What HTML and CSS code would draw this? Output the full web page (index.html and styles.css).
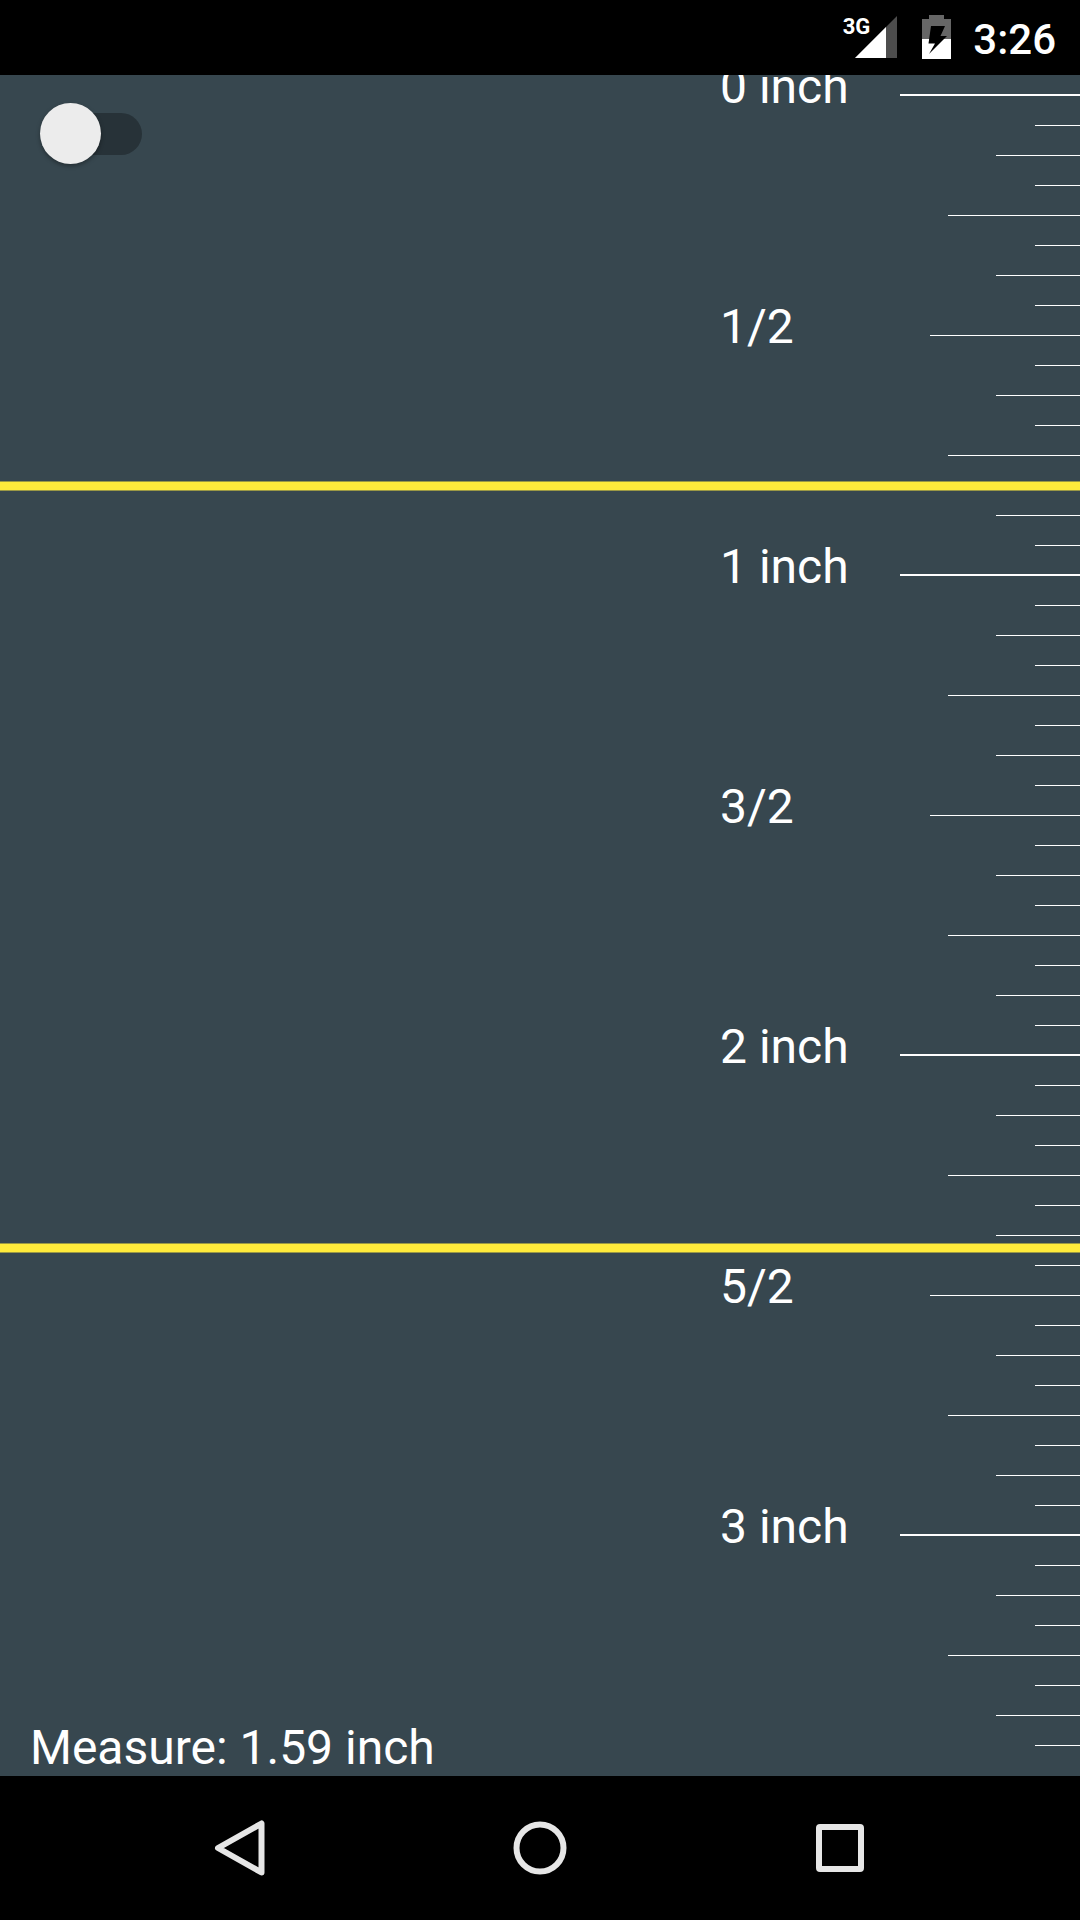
FILE: index.html
```html
<!DOCTYPE html>
<html lang="en">
<head>
<meta charset="utf-8">
<meta name="viewport" content="width=device-width, initial-scale=1">
<title>Ruler</title>
<link rel="stylesheet" href="styles.css">
</head>
<body>
<header class="status-bar">
  <div class="signal">
    <span class="network">3G</span>
    <svg class="signal-icon" viewBox="0 0 44 44" aria-hidden="true">
      <path d="M1 43L43 1V43Z" fill="#4d4d4d"/>
      <path d="M1 43L32 12V43Z" fill="#fff"/>
    </svg>
  </div>
  <svg class="battery-icon" viewBox="0 0 29 44" aria-hidden="true">
    <path d="M7 0H22V4H29V24H0V4H7Z" fill="#666"/>
    <path d="M0 24H29V44H0Z" fill="#fff"/>
    <path d="M9 11H23L18.500 21H25L7 39L13 28.500H6.500Z" fill="#000"/>
  </svg>
  <time class="clock">3:26</time>
</header>

<main class="stage">
  <section class="panel">
    <input class="switch" type="checkbox" role="switch" aria-label="Use centimetres">
    <output class="measure">Measure: 1.59 inch</output>
  </section>
  <ol class="labels">
    <li>0 inch</li>
    <li>1/2</li>
    <li>1 inch</li>
    <li>3/2</li>
    <li>2 inch</li>
    <li>5/2</li>
    <li>3 inch</li>
  </ol>
  <div class="ticks" id="ticks" aria-hidden="true"></div>
  <div class="marker marker-start" role="separator" aria-label="Start marker"></div>
  <div class="marker marker-end" role="separator" aria-label="End marker"></div>
</main>

<nav class="nav-bar" aria-label="System navigation">
  <button class="nav-button" type="button" aria-label="Back">
    <svg class="nav-icon" viewBox="0 0 72 72" aria-hidden="true"><path d="M57.500 11.500V60.500L14 36Z"/></svg>
  </button>
  <button class="nav-button" type="button" aria-label="Home">
    <svg class="nav-icon" viewBox="0 0 72 72" aria-hidden="true"><circle cx="36" cy="36" r="23.5"/></svg>
  </button>
  <button class="nav-button" type="button" aria-label="Overview">
    <svg class="nav-icon" viewBox="0 0 72 72" aria-hidden="true"><rect x="15" y="15" width="42" height="42" rx="1"/></svg>
  </button>
</nav>
<script src="ruler.js"></script>
</body>
</html>
```
FILE: styles.css
```css
* {
  box-sizing: border-box;
}

body {
  display: flex;
  flex-direction: column;
  min-height: 100vh;
  margin: 0;
  background: #000;
  color: #fff;
  font-family: Roboto, sans-serif;
  font-size: 48px;
  line-height: 56px;
}

/* Status bar */
.status-bar {
  display: flex;
  justify-content: flex-end;
  align-items: flex-start;
  gap: 22px;
  height: 75px;
  padding: 15px 24px 0;
}

.signal {
  display: flex;
  align-items: flex-start;
  margin-right: 2px;
}

.network {
  margin-right: -16px;
  font-size: 22px;
  font-weight: 700;
  line-height: 24px;
}

.signal-icon {
  width: 44px;
  height: 44px;
}

.battery-icon {
  width: 29px;
  height: 44px;
}

.clock {
  font-size: 42px;
  font-weight: 500;
  line-height: 50px;
}

/* Ruler */
.stage {
  position: relative;
  display: flex;
  flex: 1;
  overflow: hidden;
  background: #37474f;
}

.panel {
  display: flex;
  flex: 1;
  flex-direction: column;
  justify-content: space-between;
  align-items: flex-start;
  padding: 28px 30px 0;
}

.measure {
  white-space: nowrap;
}

.labels {
  width: 180px;
  margin: -16px 0 0;
  padding: 0;
  list-style: none;
}

.labels li {
  height: 240px;
}

.labels li:last-child {
  height: 56px;
}

.ticks {
  display: flex;
  flex-direction: column;
  align-items: flex-end;
  width: 180px;
  margin-top: -9px;
}

.tick {
  width: 45px;
  height: 30px;
  border-bottom: 1px solid #fff;
}

.tick-eighth {
  width: 84px;
}

.tick-quarter {
  width: 132px;
}

.tick-half {
  width: 150px;
}

.tick-inch {
  width: 180px;
  border-bottom-width: 2px;
}

.marker {
  position: absolute;
  left: 0;
  right: 0;
  height: 10px;
  border: solid #9b9945;
  border-width: 1px 0;
  background: #ffeb3b;
}

.marker-start {
  top: 406px;
}

.marker-end {
  top: 1168px;
}

/* Switch */
.switch {
  display: grid;
  align-items: center;
  width: 102px;
  height: 61px;
  margin: 0 10px;
  appearance: none;
}

.switch::before,
.switch::after {
  grid-area: 1 / 1;
  content: "";
}

.switch::before {
  height: 42px;
  margin-left: 12px;
  border-radius: 21px;
  background: #273238;
}

.switch::after {
  width: 61px;
  height: 61px;
  border-radius: 50%;
  background: #ececec;
  box-shadow: 0 2px 4px rgba(0, 0, 0, 0.35);
}

.switch:checked::after {
  justify-self: end;
}

/* Navigation bar */
.nav-bar {
  display: flex;
  justify-content: center;
  height: 144px;
}

.nav-button {
  display: flex;
  justify-content: center;
  align-items: center;
  width: 300px;
  padding: 0;
  border: 0;
  background: none;
}

.nav-icon {
  width: 72px;
  height: 72px;
  fill: none;
  stroke: #e6e6e6;
  stroke-width: 6;
  stroke-linejoin: round;
}
```
FILE: ruler.js
```js
// One tick per sixteenth of an inch; the longest class that divides the index wins.
const steps = [
  [16, "tick-inch"],
  [8, "tick-half"],
  [4, "tick-quarter"],
  [2, "tick-eighth"],
];
const ticks = document.getElementById("ticks");

for (let i = 0; i <= 55; i++) {
  const tick = document.createElement("div");
  const step = steps.find(([n]) => i % n === 0);
  tick.className = step ? "tick " + step[1] : "tick";
  ticks.append(tick);
}
```
